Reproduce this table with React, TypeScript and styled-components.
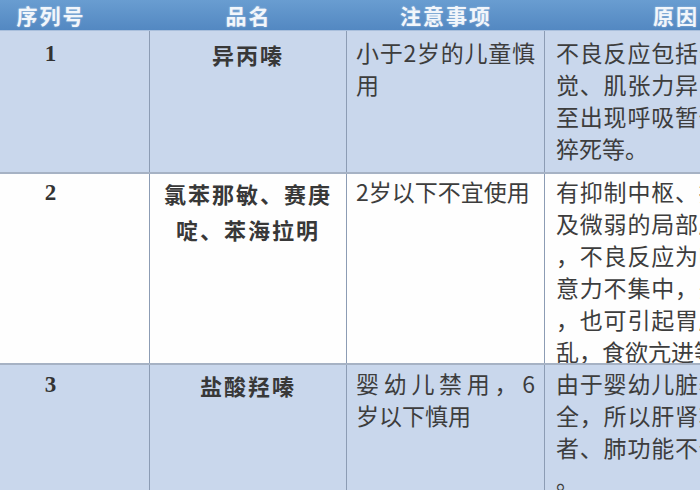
import styled, { createGlobalStyle } from "styled-components";

const Global = createGlobalStyle`
  html, body {
    margin: 0;
    padding: 0;
    background: #ffffff;
    overflow: hidden;
  }
  body {
    width: 700px;
    height: 490px;
  }
`;

// column tracks: the first column starts off-screen on the left, the last runs past the right edge
const COLS = "198px 197px 198px 262px";

const Table = styled.div`
  display: flex;
  flex-direction: column;
  width: 855px;
  margin-left: -48px;
  font-family: "Noto Sans CJK SC", "Noto Sans", sans-serif;
`;

const HeaderRow = styled.div`
  display: grid;
  grid-template-columns: ${COLS};
  height: 31px;
  box-sizing: border-box;
  background: linear-gradient(#699dd1, #5388c2);
  border-bottom: 1px solid #a9bfdc;
`;

const HeadCell = styled.div`
  text-align: center;
  color: #f2f6fb;
  font-weight: 700;
  font-size: 21px;
  line-height: 30px;
  letter-spacing: 2px;
  text-shadow: 0 0 2px rgba(255, 255, 255, 0.45);
`;

const Row = styled.div<{ $tone: "blue" | "white"; $h: number; $inset: number }>`
  --inset: ${(p) => p.$inset}px;
  display: grid;
  grid-template-columns: ${COLS};
  height: ${(p) => p.$h}px;
  box-sizing: border-box;
  background: ${(p) => (p.$tone === "blue" ? "#c9d7ec" : "#fefefe")};
  border-bottom: 2px solid #a6b2c4;
`;

const Cell = styled.div`
  padding-top: var(--inset);
  border-right: 1px solid #8c9cb4;
  overflow: hidden;
  color: #3d3d3d;
`;

const NumCell = styled(Cell)`
  text-align: center;
  font-family: "Liberation Serif", "Times New Roman", serif;
  font-weight: 700;
  font-size: 23px;
  line-height: 36px;
  color: #333333;
`;

const NameCell = styled(Cell)`
  text-align: center;
  font-weight: 700;
  font-size: 22px;
  line-height: 36px;
  letter-spacing: 2px;
  color: #383838;
`;

const NoteCell = styled(Cell)`
  padding-left: 9px;
  padding-right: 9px;
  font-size: 23px;
  line-height: 32px;
`;

const ReasonCell = styled(Cell)`
  padding-left: 11px;
  font-size: 23px;
  line-height: 32px;
  white-space: nowrap;
  border-right: none;
`;

const NoteLine = styled.div<{ $fill?: boolean }>`
  text-align: left;
  text-align-last: ${(p) => (p.$fill ? "justify" : "left")};
`;

const ReasonLine = styled.div<{ $fill?: boolean }>`
  letter-spacing: ${(p) => (p.$fill ? "0.8px" : "0")};
`;

type Item = {
  no: string;
  name: string[];
  note: string[];
  reason: string[];
  tone: "blue" | "white";
  h: number;
  inset: number;
};

const items: Item[] = [
  {
    no: "1",
    name: ["异丙嗪"],
    note: ["小于2岁的儿童慎", "用"],
    reason: ["不良反应包括幻", "觉、肌张力异常，甚", "至出现呼吸暂停、", "猝死等。"],
    tone: "blue",
    h: 143,
    inset: 5,
  },
  {
    no: "2",
    name: ["氯苯那敏、赛庚", "啶、苯海拉明"],
    note: ["2岁以下不宜使用"],
    reason: [
      "有抑制中枢、抗胆碱",
      "及微弱的局部麻醉作用",
      "，不良反应为嗜睡、注",
      "意力不集中，头晕等",
      "，也可引起胃肠功能紊",
      "乱，食欲亢进等。",
    ],
    tone: "white",
    h: 191,
    inset: 1,
  },
  {
    no: "3",
    name: ["盐酸羟嗪"],
    note: ["婴幼儿禁用，6", "岁以下慎用"],
    reason: ["由于婴幼儿脏器发育不", "全，所以肝肾功能不全", "者、肺功能不全者禁用", "。"],
    tone: "blue",
    h: 150,
    inset: 2,
  },
];

export default function App() {
  return (
    <>
      <Global />
      <Table>
        <HeaderRow>
          <HeadCell>序列号</HeadCell>
          <HeadCell>品名</HeadCell>
          <HeadCell>注意事项</HeadCell>
          <HeadCell>原因</HeadCell>
        </HeaderRow>
        {items.map((it) => (
          <Row key={it.no} $tone={it.tone} $h={it.h} $inset={it.inset}>
            <NumCell>{it.no}</NumCell>
            <NameCell>
              {it.name.map((l) => (
                <div key={l}>{l}</div>
              ))}
            </NameCell>
            <NoteCell>
              {it.note.map((l, i) => (
                <NoteLine key={l} $fill={i < it.note.length - 1}>
                  {l}
                </NoteLine>
              ))}
            </NoteCell>
            <ReasonCell>
              {it.reason.map((l, i) => (
                <ReasonLine key={l} $fill={i < it.reason.length - 1}>
                  {l}
                </ReasonLine>
              ))}
            </ReasonCell>
          </Row>
        ))}
      </Table>
    </>
  );
}
